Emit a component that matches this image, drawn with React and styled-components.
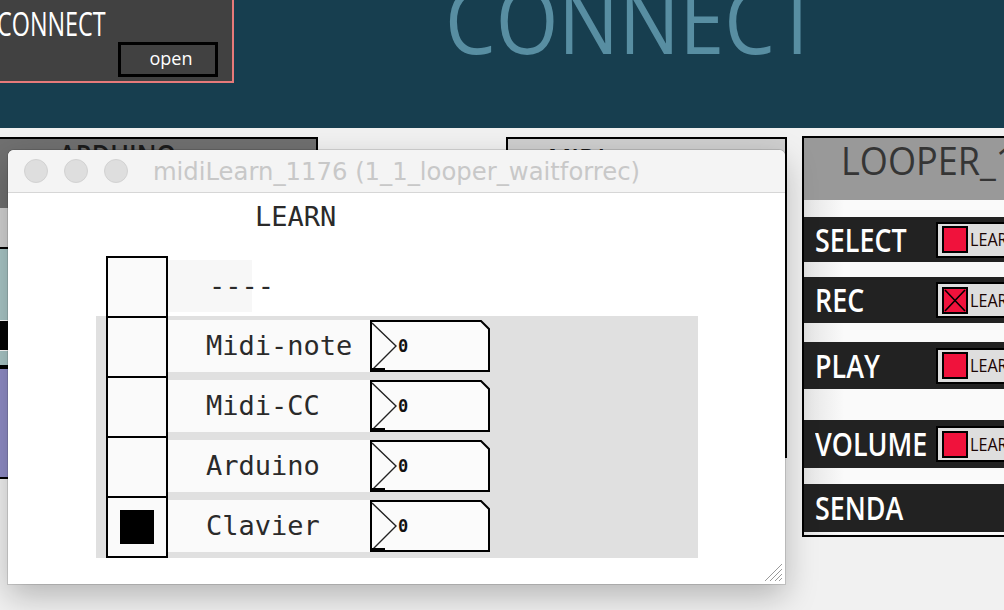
import React from "react";
import styled, { createGlobalStyle } from "styled-components";

const GlobalStyle = createGlobalStyle`
  html, body { margin: 0; padding: 0; }
  body {
    width: 1004px;
    height: 610px;
    overflow: hidden;
    background: #f1f1f1;
    font-family: "Open Sans", "Liberation Sans", sans-serif;
  }
  #root { width: 1004px; height: 610px; }
`;

const Page = styled.div`
  width: 1004px;
  height: 610px;
  display: flex;
  flex-direction: column;
  overflow: hidden;
`;

/* ---------- top bar ---------- */
const TopBar = styled.header`
  height: 128px;
  flex: none;
  background: #173e4f;
  display: flex;
  align-items: flex-start;
  overflow: hidden;
`;

const ConnectBox = styled.div`
  width: 234px;
  height: 83px;
  flex: none;
  box-sizing: border-box;
  background: #414141;
  border-right: 2px solid #e67a7a;
  border-bottom: 2px solid #e67a7a;
  display: flex;
  flex-direction: column;
  align-items: flex-start;
`;

const ConnectLabel = styled.div`
  margin: 8px 0 0 -3px;
  font-size: 32px;
  line-height: 32px;
  color: #fff;
  white-space: nowrap;
  transform: scaleX(0.73);
  transform-origin: left top;
`;

const OpenButton = styled.button`
  align-self: flex-end;
  margin: 2px 14px 0 0;
  width: 100px;
  height: 35px;
  box-sizing: border-box;
  border: 3px solid #000;
  background: transparent;
  color: #fff;
  font-family: "Open Sans", sans-serif;
  font-size: 18px;
  line-height: 1;
  padding: 0 0 3px 6px;
  display: flex;
  align-items: center;
  justify-content: center;
`;

const BigTitle = styled.h1`
  margin: -27px 0 0 211px;
  font-weight: 400;
  font-size: 92px;
  line-height: 92px;
  color: #588ea2;
  white-space: nowrap;
  transform: scaleX(0.875);
  transform-origin: left top;
`;

/* ---------- canvas & patch panels ---------- */
const Canvas = styled.main`
  position: relative;
  flex: 1;
`;

const Panel = styled.section`
  position: absolute;
  left: ${(p) => p.$x}px;
  top: ${(p) => p.$y}px;
  width: ${(p) => p.$w}px;
  height: ${(p) => p.$h}px;
  box-sizing: border-box;
  border: 2px solid #000;
  display: flex;
  flex-direction: column;
  overflow: hidden;
  background: ${(p) => p.$bg || "#eee"};
`;

const PanelHeader = styled.div`
  flex: none;
  height: ${(p) => p.$h}px;
  background: ${(p) => p.$bg};
  color: ${(p) => p.$color || "#1c1c1c"};
  font-size: ${(p) => p.$size || 28}px;
  font-weight: ${(p) => p.$weight || 600};
  line-height: 1;
  padding: ${(p) => p.$pad};
  box-sizing: border-box;
  white-space: nowrap;
`;

const HeaderText = styled.span`
  display: inline-block;
  transform: scaleX(${(p) => p.$sx || 1});
  transform-origin: left top;
`;

const Strip = styled.div`
  flex: ${(p) => (p.$grow ? 1 : "none")};
  height: ${(p) => (p.$grow ? "auto" : `${p.$h}px`)};
  background: ${(p) => p.$bg};
  border-bottom: ${(p) => (p.$line ? "2px solid #000" : "none")};
  display: flex;
  flex-direction: column;
`;

const Bar = styled.div`
  margin-top: ${(p) => p.$top}px;
  height: ${(p) => p.$h}px;
  width: 40px;
  background: #050505;
  border-top: 1px solid #fff;
  border-bottom: 1px solid #fff;
`;

/* ---------- looper panel ---------- */
const LooperBody = styled.div`
  flex: 1;
  display: flex;
  flex-direction: column;
  background: linear-gradient(90deg, #e4e4e4 0, #fafafa 40px, #fafafa 100%);
`;

const LoopRow = styled.div`
  flex: none;
  margin-top: ${(p) => p.$gap}px;
  height: ${(p) => p.$h}px;
  background: #222;
  display: flex;
  align-items: center;
`;

const LoopLabel = styled.div`
  width: 132px;
  flex: none;
  padding-left: 11px;
  box-sizing: border-box;
  color: #fff;
  font-size: 32px;
  font-weight: 600;
  line-height: 1;
  white-space: nowrap;
`;

const LearnWidget = styled.div`
  flex: none;
  width: 110px;
  height: 36px;
  box-sizing: border-box;
  border: 2px solid #000;
  background: #dedede;
  display: flex;
  align-items: center;
  gap: 2px;
  padding-left: 4px;
`;

const RedBox = styled.div`
  width: 26px;
  height: 27px;
  box-sizing: border-box;
  border: 2px solid #000;
  background: #f0123c;
  display: flex;
`;

const LearnText = styled.span`
  display: inline-block;
  font-size: 19px;
  line-height: 1;
  color: #1a0505;
  transform: scaleX(0.85);
  transform-origin: left center;
`;

/* ---------- floating mac window ---------- */
const Window = styled.div`
  position: absolute;
  left: 8px;
  top: 22px;
  width: 777px;
  height: 434px;
  z-index: 10;
  background: #fff;
  border-radius: 6px 6px 0 0;
  box-shadow: 0 0 0 1px rgba(0, 0, 0, 0.12), 0 12px 32px rgba(0, 0, 0, 0.25);
  display: flex;
  flex-direction: column;
`;

const TitleBar = styled.div`
  flex: none;
  height: 42px;
  border-bottom: 1px solid #d6d6d6;
  border-radius: 6px 6px 0 0;
  background: #f4f4f4;
  display: grid;
  grid-template-columns: 120px 1fr 120px;
  align-items: center;
`;

const Lights = styled.div`
  display: flex;
  gap: 16px;
  padding-left: 16px;
`;

const Light = styled.span`
  width: 24px;
  height: 24px;
  box-sizing: border-box;
  border-radius: 50%;
  background: #dedede;
  border: 1px solid #d2d2d2;
`;

const WindowTitle = styled.div`
  text-align: center;
  font-family: "DejaVu Sans", "Liberation Sans", sans-serif;
  font-size: 24.3px;
  color: #c8c8c8;
  white-space: nowrap;
`;

const WindowBody = styled.div`
  flex: 1;
  position: relative;
  display: flex;
  flex-direction: column;
  font-family: "DejaVu Sans Mono", "Liberation Mono", monospace;
  color: #2a2a2a;
`;

const LearnHeading = styled.div`
  margin-top: 10px;
  padding-left: 247px;
  font-size: 27px;
  line-height: 27px;
`;

const Matrix = styled.div`
  margin-top: 26px;
  display: flex;
  flex-direction: column;
`;

const Row = styled.div`
  display: flex;
  align-items: flex-start;
  margin-top: ${(p) => (p.$first ? 0 : -2)}px;
  margin-left: ${(p) => p.$indent || 0}px;
`;

const GreyPanel = styled.div`
  margin: -2px 0 0 88px;
  width: 602px;
  box-sizing: border-box;
  padding-left: 10px;
  background: #e0e0e0;
  display: flex;
  flex-direction: column;
`;

const Toggle = styled.div`
  width: 62px;
  height: 62px;
  flex: none;
  box-sizing: border-box;
  border: 2px solid #000;
  background: #fafafa;
  display: flex;
  align-items: center;
  justify-content: center;
`;

const Check = styled.span`
  width: 34px;
  height: 34px;
  background: #000;
`;

const RowLabel = styled.div`
  margin-top: 4px;
  width: ${(p) => p.$w}px;
  height: 52px;
  flex: none;
  box-sizing: border-box;
  padding-left: ${(p) => p.$pad || 38}px;
  background: ${(p) => p.$bg || "#fafafa"};
  font-size: 27px;
  line-height: 52px;
  white-space: nowrap;
`;

const NumberBox = styled.div`
  position: relative;
  margin-top: 4px;
  width: 120px;
  height: 52px;
  flex: none;
`;

const NumberOutline = styled.svg`
  position: absolute;
  inset: 0;
`;

const NumberValue = styled.span`
  position: relative;
  display: block;
  padding-left: 28px;
  font-size: 17px;
  font-weight: 700;
  line-height: 52px;
  color: #111;
`;

const Grip = styled.svg`
  position: absolute;
  right: 2px;
  bottom: 2px;
`;

const rows = [
  { label: "Midi-note", on: false },
  { label: "Midi-CC", on: false },
  { label: "Arduino", on: false },
  { label: "Clavier", on: true },
];

const looperRows = [
  { label: "SELECT", gap: 17, h: 45, learn: "on" },
  { label: "REC", gap: 15, h: 46, learn: "x" },
  { label: "PLAY", gap: 19, h: 47, learn: "on" },
  { label: "VOLUME", gap: 31, h: 48, learn: "on" },
  { label: "SENDA", gap: 16, h: 48, learn: null },
];

function NumBox() {
  return (
    <NumberBox>
      <NumberOutline width="120" height="52" viewBox="0 0 120 52">
        <path d="M1 1 H111 L119 9 V51 H1 Z" fill="#fbfbfb" stroke="#000" strokeWidth="2" />
        <path d="M2 3 L26 26 L3 49" fill="none" stroke="#222" strokeWidth="1.4" />
        <path d="M2 49 H15" stroke="#000" strokeWidth="2" />
      </NumberOutline>
      <NumberValue>0</NumberValue>
    </NumberBox>
  );
}

export default function App() {
  return (
    <Page>
      <GlobalStyle />
      <TopBar>
        <ConnectBox>
          <ConnectLabel>CONNECT</ConnectLabel>
          <OpenButton>open</OpenButton>
        </ConnectBox>
        <BigTitle>CONNECT</BigTitle>
      </TopBar>

      <Canvas>
        <Panel $x={-2} $y={9} $w={320} $h={342} $bg="#e8e8e8">
          <PanelHeader $h={69} $bg="#707070" $pad="2px 0 0 59px">
            <HeaderText $sx={0.9}>ARDUINO</HeaderText>
          </PanelHeader>
          <Strip $h={39} $bg="#d2d2d2" $line />
          <Strip $h={116} $bg="#a9c6c6">
            <Bar $top={71} $h={29} />
          </Strip>
          <Strip $h={4} $bg="#000" />
          <Strip $grow $bg="#908dc7" />
        </Panel>

        <Panel $x={506} $y={9} $w={281} $h={321} $bg="#dadada">
          <PanelHeader $h={62} $bg="#cfcfcf" $pad="6px 0 0 40px">
            <HeaderText $sx={0.9}>MIDI</HeaderText>
          </PanelHeader>
        </Panel>

        <Panel $x={802} $y={8} $w={240} $h={401} $bg="#fafafa">
          <PanelHeader $h={62} $bg="#999999" $color="#353535" $size={38} $weight={400} $pad="3px 0 0 37px">
            <HeaderText $sx={0.95}>LOOPER_1</HeaderText>
          </PanelHeader>
          <LooperBody>
            {looperRows.map((r) => (
              <LoopRow key={r.label} $gap={r.gap} $h={r.h}>
                <LoopLabel>
                  <HeaderText $sx={0.84}>{r.label}</HeaderText>
                </LoopLabel>
                {r.learn && (
                  <LearnWidget>
                    <RedBox>
                      {r.learn === "x" && (
                        <svg width="22" height="23" viewBox="0 0 22 23">
                          <path d="M1 1 L21 22 M21 1 L1 22" stroke="#000" strokeWidth="1.6" />
                        </svg>
                      )}
                    </RedBox>
                    <LearnText>LEARN</LearnText>
                  </LearnWidget>
                )}
              </LoopRow>
            ))}
          </LooperBody>
        </Panel>

        <Window>
          <TitleBar>
            <Lights>
              <Light />
              <Light />
              <Light />
            </Lights>
            <WindowTitle>midiLearn_1176 (1_1_looper_waitforrec)</WindowTitle>
            <span />
          </TitleBar>
          <WindowBody>
            <LearnHeading>LEARN</LearnHeading>
            <Matrix>
              <Row $first $indent={98}>
                <Toggle />
                <RowLabel $w={84} $pad={41} $bg="#f7f7f7">----</RowLabel>
              </Row>
              <GreyPanel>
                {rows.map((r, i) => (
                  <Row key={r.label} $first={i === 0}>
                    <Toggle>{r.on && <Check />}</Toggle>
                    <RowLabel $w={202}>{r.label}</RowLabel>
                    <NumBox />
                  </Row>
                ))}
              </GreyPanel>
            </Matrix>
            <Grip width="20" height="20" viewBox="0 0 20 20">
              <path d="M19 7 L7 19 M19 12 L12 19 M19 16 L16 19 M19 2 L2 19" stroke="#9a9a9a" strokeWidth="1" />
            </Grip>
          </WindowBody>
        </Window>
      </Canvas>
    </Page>
  );
}
